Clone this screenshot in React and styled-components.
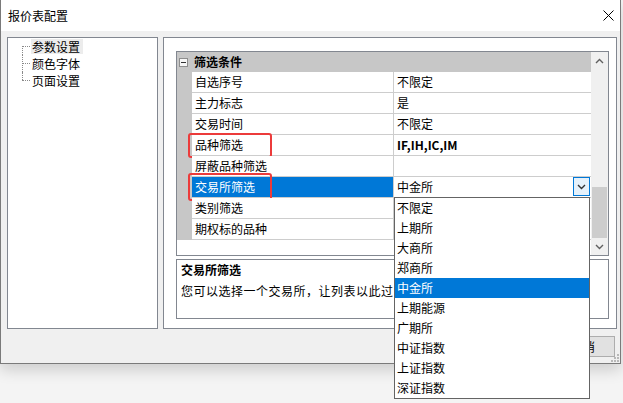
import styled, { createGlobalStyle } from "styled-components";

const GlobalStyle = createGlobalStyle`
  *, *::before, *::after { box-sizing: border-box; }
  html, body { margin: 0; padding: 0; background: #f4f4f4; }
  #root { height: 403px; overflow: hidden; }
  body {
    font-family: "Noto Sans CJK SC", "Noto Sans", sans-serif;
    font-size: 12px;
    color: #000;
  }
`;

const Window = styled.div`
  position: relative;
  width: 621px;
  height: 364px;
  border: 1px solid #7a7a7a;
  border-top: none;
  background: #f0f0f0;
  display: flex;
  flex-direction: column;
  box-shadow: 0 6px 14px rgba(0, 0, 0, 0.16);
`;

const TitleBar = styled.div`
  height: 31px;
  flex: none;
  background: #fff;
  display: flex;
  align-items: center;
  justify-content: space-between;
  padding: 0 6px 0 7px;
  line-height: 16px;
`;

const Body = styled.div`
  flex: 1;
  display: flex;
  flex-direction: column;
  padding: 6px 3px 0 6px;
`;

const Panels = styled.div`
  display: flex;
  gap: 5px;
  height: 292px;
`;

const TreePanel = styled.div`
  width: 151px;
  flex: none;
  background: #fff;
  border: 1px solid #828790;
`;

const TreeList = styled.ul`
  list-style: none;
  margin: 0 0 0 14px;
  padding: 0;
`;

const TreeItem = styled.li`
  position: relative;
  height: 17px;
  display: flex;
  align-items: center;
  padding-left: 9px;

  &::before {
    content: "";
    position: absolute;
    left: 0;
    top: 8px;
    width: 8px;
    border-top: 1px dotted #8a8a8a;
  }
  &::after {
    content: "";
    position: absolute;
    left: 0;
    top: ${(p) => (p.$first ? "8px" : "0")};
    bottom: ${(p) => (p.$last ? "9px" : "0")};
    border-left: 1px dotted #8a8a8a;
  }
`;

const TreeLabel = styled.span`
  line-height: 15px;
  padding: 0 3px 0 1px;
  background: ${(p) => (p.$active ? "#ececec" : "transparent")};
`;

const SettingsPanel = styled.div`
  flex: 1;
  background: #fff;
  border: 1px solid #828790;
  padding: 13px 7px 9px 12px;
  display: flex;
  flex-direction: column;
`;

const Grid = styled.div`
  height: 205px;
  flex: none;
  border: 1px solid #828790;
  display: flex;
`;

const GridContent = styled.div`
  flex: 1;
  background: #fff;
`;

const CategoryHeader = styled.div`
  height: 20px;
  background: #c7c7c7;
  display: flex;
  align-items: center;
  padding-left: 2px;
  gap: 6px;
  font-weight: bold;
  line-height: 20px;
`;

const Toggle = styled.span`
  width: 9px;
  height: 9px;
  border: 1px solid #8e8e8e;
  background: #f7f7f7;
  display: flex;
  align-items: center;
  justify-content: center;

  &::before {
    content: "";
    width: 5px;
    border-top: 1px solid #333;
  }
`;

const Row = styled.div`
  display: flex;
  height: 21px;
`;

const Gutter = styled.div`
  width: 15px;
  flex: none;
  background: #c7c7c7;
`;

const LabelCell = styled.div`
  position: relative;
  width: 202px;
  flex: none;
  padding-left: 3px;
  line-height: 20px;
  border-right: 1px solid #cdcdcd;
  border-bottom: 1px solid #cdcdcd;
  background: ${(p) => (p.$selected ? "#0078d7" : "#fff")};
  color: ${(p) => (p.$selected ? "#fff" : "#000")};
  white-space: nowrap;
`;

const RedMark = styled.span`
  position: absolute;
  left: -4px;
  top: ${(p) => p.$top}px;
  width: 84px;
  height: ${(p) => p.$height}px;
  border: 2px solid #ec3b3b;
  border-radius: 3px;
  pointer-events: none;
`;

const ValueCell = styled.div`
  position: relative;
  flex: 1;
  display: flex;
  align-items: center;
  justify-content: space-between;
  padding-left: 3px;
  line-height: 20px;
  border-bottom: 1px solid #cdcdcd;
  font-weight: ${(p) => (p.$bold ? "bold" : "normal")};
`;

const DropButton = styled.span`
  width: 17px;
  height: 19px;
  margin: 0 1px 1px 0;
  border: 1px solid #0078d7;
  background: #e5f1fb;
  display: flex;
  align-items: center;
  justify-content: center;
`;

const DropList = styled.ul`
  position: absolute;
  z-index: 10;
  top: 100%;
  left: 0;
  width: 196px;
  margin: 0;
  padding: 0;
  list-style: none;
  background: #fff;
  border: 1px solid #646464;
  font-weight: normal;
`;

const DropItem = styled.li`
  height: 20px;
  line-height: 20px;
  padding-left: 2px;
  background: ${(p) => (p.$active ? "#0078d7" : "#fff")};
  color: ${(p) => (p.$active ? "#fff" : "#000")};
`;

const Scrollbar = styled.div`
  width: 17px;
  flex: none;
  background: #f0f0f0;
  display: flex;
  flex-direction: column;
`;

const ScrollArrow = styled.div`
  height: 17px;
  flex: none;
  display: flex;
  align-items: center;
  justify-content: center;
`;

const ScrollTrack = styled.div`
  flex: 1;
  display: flex;
  flex-direction: column;
  justify-content: flex-end;
`;

const Thumb = styled.div`
  height: 51px;
  margin: 0 1px;
  background: #cdcdcd;
`;

const Description = styled.div`
  margin-top: 3px;
  height: 60px;
  border: 1px solid #828790;
  padding: 1px 4px;
  white-space: nowrap;
  overflow: hidden;
`;

const DescTitle = styled.div`
  font-weight: bold;
  line-height: 18px;
`;

const DescText = styled.div`
  width: 212px;
  overflow: hidden;
  margin-top: 2px;
  line-height: 20px;
  letter-spacing: 0.5px;
`;

const Footer = styled.div`
  display: flex;
  justify-content: flex-end;
  gap: 8px;
  padding: 7px 2px 0 0;
`;

const Button = styled.button`
  width: 64px;
  height: 21px;
  padding: 0;
  border: 1px solid #adadad;
  background: #e1e1e1;
  font: inherit;
  line-height: 19px;
  color: #000;
`;

const Grip = styled.svg`
  position: absolute;
  right: 1px;
  bottom: 1px;
`;

const Chevron = ({ up, color = "#606060" }) => (
  <svg width="9" height="6" viewBox="0 0 9 6">
    <path
      d={up ? "M1 5 L4.5 1.5 L8 5" : "M1 1 L4.5 4.5 L8 1"}
      fill="none"
      stroke={color}
      strokeWidth="1.4"
    />
  </svg>
);

const CloseIcon = () => (
  <svg width="11" height="11" viewBox="0 0 11 11">
    <path d="M0.5 0.5 L10.5 10.5 M10.5 0.5 L0.5 10.5" stroke="#000" strokeWidth="1" />
  </svg>
);

const treeItems = ["参数设置", "颜色字体", "页面设置"];

const rows = [
  { label: "自选序号", value: "不限定" },
  { label: "主力标志", value: "是" },
  { label: "交易时间", value: "不限定" },
  { label: "品种筛选", value: "IF,IH,IC,IM", bold: true, mark: { top: -2, height: 25 } },
  { label: "屏蔽品种筛选", value: "" },
  { label: "交易所筛选", value: "中金所", selected: true, mark: { top: -4, height: 28 } },
  { label: "类别筛选", value: "" },
  { label: "期权标的品种", value: "" },
];

const exchanges = [
  "不限定",
  "上期所",
  "大商所",
  "郑商所",
  "中金所",
  "上期能源",
  "广期所",
  "中证指数",
  "上证指数",
  "深证指数",
];

export default function App() {
  return (
    <>
      <GlobalStyle />
      <Window>
        <TitleBar>
          <span>报价表配置</span>
          <CloseIcon />
        </TitleBar>
        <Body>
          <Panels>
            <TreePanel>
              <TreeList>
                {treeItems.map((item, i) => (
                  <TreeItem key={item} $first={i === 0} $last={i === treeItems.length - 1}>
                    <TreeLabel $active={i === 0}>{item}</TreeLabel>
                  </TreeItem>
                ))}
              </TreeList>
            </TreePanel>
            <SettingsPanel>
              <Grid>
                <GridContent>
                  <CategoryHeader>
                    <Toggle />
                    筛选条件
                  </CategoryHeader>
                  {rows.map((row) => (
                    <Row key={row.label}>
                      <Gutter />
                      <LabelCell $selected={row.selected}>
                        {row.label}
                        {row.mark && <RedMark $top={row.mark.top} $height={row.mark.height} />}
                      </LabelCell>
                      <ValueCell $bold={row.bold}>
                        {row.value}
                        {row.selected && (
                          <>
                            <DropButton>
                              <Chevron color="#333" />
                            </DropButton>
                            <DropList>
                              {exchanges.map((ex) => (
                                <DropItem key={ex} $active={ex === row.value}>
                                  {ex}
                                </DropItem>
                              ))}
                            </DropList>
                          </>
                        )}
                      </ValueCell>
                    </Row>
                  ))}
                </GridContent>
                <Scrollbar>
                  <ScrollArrow>
                    <Chevron up />
                  </ScrollArrow>
                  <ScrollTrack>
                    <Thumb />
                  </ScrollTrack>
                  <ScrollArrow>
                    <Chevron />
                  </ScrollArrow>
                </Scrollbar>
              </Grid>
              <Description>
                <DescTitle>交易所筛选</DescTitle>
                <DescText>您可以选择一个交易所，让列表以此过滤。</DescText>
              </Description>
            </SettingsPanel>
          </Panels>
          <Footer>
            <Button>确定</Button>
            <Button>取消</Button>
          </Footer>
        </Body>
        <Grip width="9" height="9" viewBox="0 0 9 9">
          <g fill="#b8b8b8">
            <rect x="7" y="1" width="2" height="2" />
            <rect x="4" y="4" width="2" height="2" />
            <rect x="7" y="4" width="2" height="2" />
            <rect x="1" y="7" width="2" height="2" />
            <rect x="4" y="7" width="2" height="2" />
            <rect x="7" y="7" width="2" height="2" />
          </g>
        </Grip>
      </Window>
    </>
  );
}
